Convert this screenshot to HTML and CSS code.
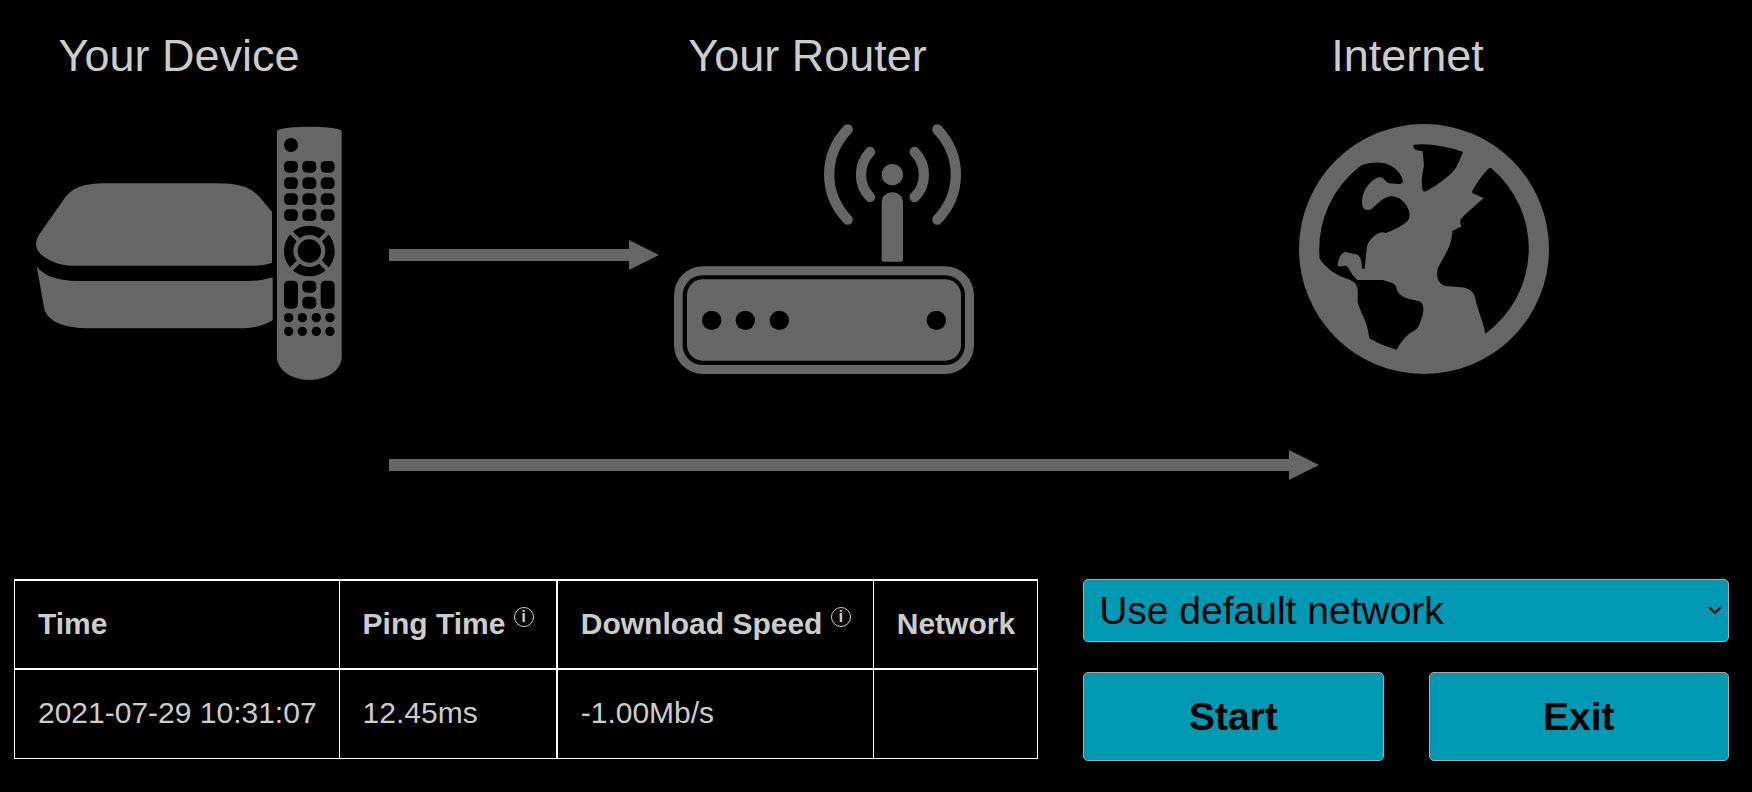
FILE: index.html
```
<!DOCTYPE html>
<html lang="en">
<head>
    <meta charset="UTF-8">
    <meta name="viewport" content="width=device-width, initial-scale=1.0">
    <title>Network Test</title>
    <link rel="stylesheet" href="styles.css">
</head>
<body>
    <main>
        <div class="diagram">
            <h2 class="title title-device">Your Device</h2>
            <h2 class="title title-router">Your Router</h2>
            <h2 class="title title-internet">Internet</h2>

            <svg class="icon icon-device" viewBox="108 372 918 768" aria-hidden="true">
                <!-- box -->
                <path d="M215 797C165 797 108 765 108 735C108 722 112 712 120 700L190 600C215 564 245 550 320 550H650C715 550 750 560 778 590L816 635V788C800 794 780 797 760 797Z"/>
                <path d="M110 799C130 828 175 843 235 843H740C775 843 800 838 818 832V961C790 978 760 985 715 985H270C200 985 140 968 132 922Z"/>
                <!-- remote -->
                <path d="M831 392C850 376 1006 376 1025 392V1075C1022 1108 985 1140 928 1140C871 1140 834 1108 831 1075Z"/>
                <g class="hole">
                    <circle cx="873" cy="435" r="21"/>
                    <rect x="852" y="483" width="42" height="35" rx="14"/>
                    <rect x="907" y="483" width="42" height="35" rx="14"/>
                    <rect x="962" y="483" width="42" height="35" rx="14"/>
                    <rect x="852" y="532" width="42" height="35" rx="14"/>
                    <rect x="907" y="532" width="42" height="35" rx="14"/>
                    <rect x="962" y="532" width="42" height="35" rx="14"/>
                    <rect x="852" y="580" width="42" height="35" rx="14"/>
                    <rect x="907" y="580" width="42" height="35" rx="14"/>
                    <rect x="962" y="580" width="42" height="35" rx="14"/>
                    <rect x="852" y="628" width="42" height="35" rx="14"/>
                    <rect x="907" y="628" width="42" height="35" rx="14"/>
                    <rect x="962" y="628" width="42" height="35" rx="14"/>
                    <circle cx="928" cy="753" r="76"/>
                    <rect x="852" y="842" width="42" height="84" rx="14"/>
                    <rect x="907" y="842" width="42" height="36" rx="14"/>
                    <rect x="907" y="890" width="42" height="36" rx="14"/>
                    <rect x="962" y="842" width="42" height="84" rx="14"/>
                    <circle cx="866" cy="953" r="14"/>
                    <circle cx="907" cy="953" r="14"/>
                    <circle cx="949" cy="953" r="14"/>
                    <circle cx="990" cy="953" r="14"/>
                    <circle cx="866" cy="994" r="14"/>
                    <circle cx="907" cy="994" r="14"/>
                    <circle cx="949" cy="994" r="14"/>
                    <circle cx="990" cy="994" r="14"/>
                </g>
                <path class="line" stroke-width="13" d="M872 697L984 809M984 697L872 809"/>
                <circle cx="928" cy="753" r="48"/>
                <circle class="hole" cx="928" cy="753" r="35"/>
            </svg>

            <div class="arrow arrow-router"></div>

            <svg class="icon icon-router" viewBox="102 372 900 750" aria-hidden="true">
                <path class="line" stroke-width="31" stroke-linecap="round" d="M623 388C549 466 549 581 623 659M892 388C966 466 966 581 892 659M690 456C654 494 654 554 690 591M824 456C861 494 861 554 824 591"/>
                <circle cx="757" cy="524" r="32"/>
                <path d="M725 608C725 566 789 566 789 608V780Q789 785 784 785H730Q725 785 725 780Z"/>
                <rect x="102" y="799" width="900" height="323" rx="86"/>
                <rect class="hole" x="128" y="826" width="847" height="269" rx="60"/>
                <rect x="141" y="838" width="822" height="244" rx="47"/>
                <g class="hole">
                    <circle cx="215" cy="961" r="29"/>
                    <circle cx="316" cy="961" r="29"/>
                    <circle cx="418" cy="961" r="29"/>
                    <circle cx="889" cy="961" r="29"/>
                </g>
            </svg>

            <svg class="icon icon-internet" viewBox="57 372 750 750" aria-hidden="true">
                <circle cx="432" cy="747" r="375"/>
                <g class="hole">
                    <path d="M402 434Q470 428 549 456L537 485Q529 505 515 519C490 542 462 562 437 574Q430 577 427 567C423 540 427 520 432 498L428 454L412 451C400 448 398 438 402 434Z"/>
                    <path d="M244 496C280 483 315 485 338 500C355 511 369 532 369 546Q365 553 355 552L329 550C316 548 313 532 300 532C285 532 268 548 256 568C246 586 242 614 252 626Q262 634 276 626C292 612 310 592 330 589C355 587 377 606 386 630C392 650 389 660 372 672C355 684 335 692 317 699Q305 694 291 702C272 714 262 730 260 745L254 806H246C246 785 242 768 231 764C215 758 210 762 200 756C186 753 174 775 173 795Q176 802 186 799C198 795 204 799 207 808Q216 827 232 840H309C325 846 342 848 347 857C352 868 350 880 372 891C395 902 417 899 426 910C433 924 430 940 424 956C418 975 415 985 400 994C378 1005 362 1028 350 1049C325 1042 292 1030 268 1015C264 985 258 966 248 946C238 920 232 914 233 895C234 875 235 858 222 847C205 834 185 834 165 820C148 809 130 793 119 776A315 315 0 0 1 244 496Z"/>
                    <path d="M633 504A315 315 0 0 1 616 1001C606 952 592 930 586 895C580 872 565 862 535 861L495 858C475 850 468 835 473 806C490 770 516 740 517 693L545 679L541 671V660Q552 645 567 633L611 594L577 579V572Q600 532 624 507Q629 503 633 504Z"/>
                </g>
            </svg>

            <div class="arrow arrow-internet"></div>
        </div>

        <div class="panel">
            <table class="results">
                <thead>
                    <tr>
                        <th>Time</th>
                        <th>Ping Time <span class="info">i</span></th>
                        <th>Download Speed <span class="info">i</span></th>
                        <th>Network</th>
                    </tr>
                </thead>
                <tbody>
                    <tr>
                        <td>2021-07-29 10:31:07</td>
                        <td>12.45ms</td>
                        <td>-1.00Mb/s</td>
                        <td></td>
                    </tr>
                </tbody>
            </table>

            <div class="controls">
                <div class="select-wrap">
                    <select class="network" aria-label="Network">
                        <option>Use default network</option>
                    </select>
                    <svg class="chevron" viewBox="0 0 14 8" aria-hidden="true">
                        <path d="M1 1L7 7L13 1"/>
                    </svg>
                </div>
                <div class="buttons">
                    <button type="button" class="btn">Start</button>
                    <button type="button" class="btn">Exit</button>
                </div>
            </div>
        </div>
    </main>
</body>
</html>
```
FILE: styles.css
```
* {
    margin: 0;
    padding: 0;
    box-sizing: border-box;
}

body {
    background: #000;
    color: #ccc;
    font-family: Arial, "Liberation Sans", sans-serif;
    font-size: 30px;
}

/* diagram */
.diagram {
    display: grid;
    grid-template-columns: 306px 332fr 300px 325fr 250px 203fr;
    align-items: start;
    padding: 30px 0 0 36px;
}

.title {
    font-size: 45px;
    font-weight: normal;
    line-height: 52px;
    text-align: center;
    white-space: nowrap;
    padding-right: 33px;
    margin-bottom: 42px;
}

.title-device {
    grid-area: 1 / 1;
    padding-right: 20px;
}

.title-router {
    grid-area: 1 / 3;
}

.title-internet {
    grid-area: 1 / 5;
}

.icon {
    display: block;
    width: 100%;
    fill: #666;
}

.icon .hole {
    fill: #000;
}

.icon .line {
    fill: none;
    stroke: #666;
}

.icon-device {
    grid-area: 2 / 1;
}

.icon-router {
    grid-area: 2 / 3;
}

.icon-internet {
    grid-area: 2 / 5;
}

.arrow {
    display: flex;
    align-items: center;
    margin-left: 47px;
}

.arrow::before {
    content: "";
    flex: 1;
    height: 12px;
    background: #666;
}

.arrow::after {
    content: "";
    border: 15px solid transparent;
    border-left: 30px solid #666;
    border-right: 0;
}

.arrow-router {
    grid-area: 2 / 2;
    margin-top: 116px;
    margin-right: 15px;
}

/* the tip reaches under the globe */
.arrow-internet {
    grid-area: 3 / 2 / 4 / 5;
    margin-top: 70px;
    margin-right: -20px;
}

/* results and controls */
.panel {
    display: flex;
    align-items: flex-start;
    gap: 45px;
    padding: 99px 23px 30px 14px;
}

.results {
    border-collapse: collapse;
    white-space: nowrap;
}

.results th,
.results td {
    height: 89px;
    padding: 0 22px 2px 23px;
    border: 1px solid #fff;
    text-align: left;
    line-height: 36px;
}

.results th {
    border-top-width: 2px;
    border-bottom-width: 2px;
}

.results th:nth-child(3),
.results td:nth-child(3) {
    border-left-width: 2px;
}

.info {
    display: inline-block;
    width: 20px;
    height: 20px;
    border: 1px solid #ccc;
    border-radius: 50%;
    font-size: 17px;
    line-height: 18px;
    text-align: center;
    vertical-align: 12px;
}

.controls {
    flex: 1;
}

.select-wrap {
    position: relative;
    margin-bottom: 30px;
}

.network,
.btn {
    width: 100%;
    background: #0099b3;
    color: #000;
    border: 1px solid #aaa;
    border-radius: 5px;
    font-family: inherit;
    font-size: 39px;
}

.network {
    display: block;
    height: 63px;
    padding: 0 30px 0 15px;
    appearance: none;
}

.chevron {
    position: absolute;
    top: 27px;
    right: 7px;
    width: 14px;
    height: 8px;
    fill: none;
    stroke: #000;
    stroke-width: 2;
    pointer-events: none;
}

.buttons {
    display: flex;
    gap: 45px;
}

.btn {
    height: 89px;
    font-weight: bold;
    cursor: pointer;
}
```
